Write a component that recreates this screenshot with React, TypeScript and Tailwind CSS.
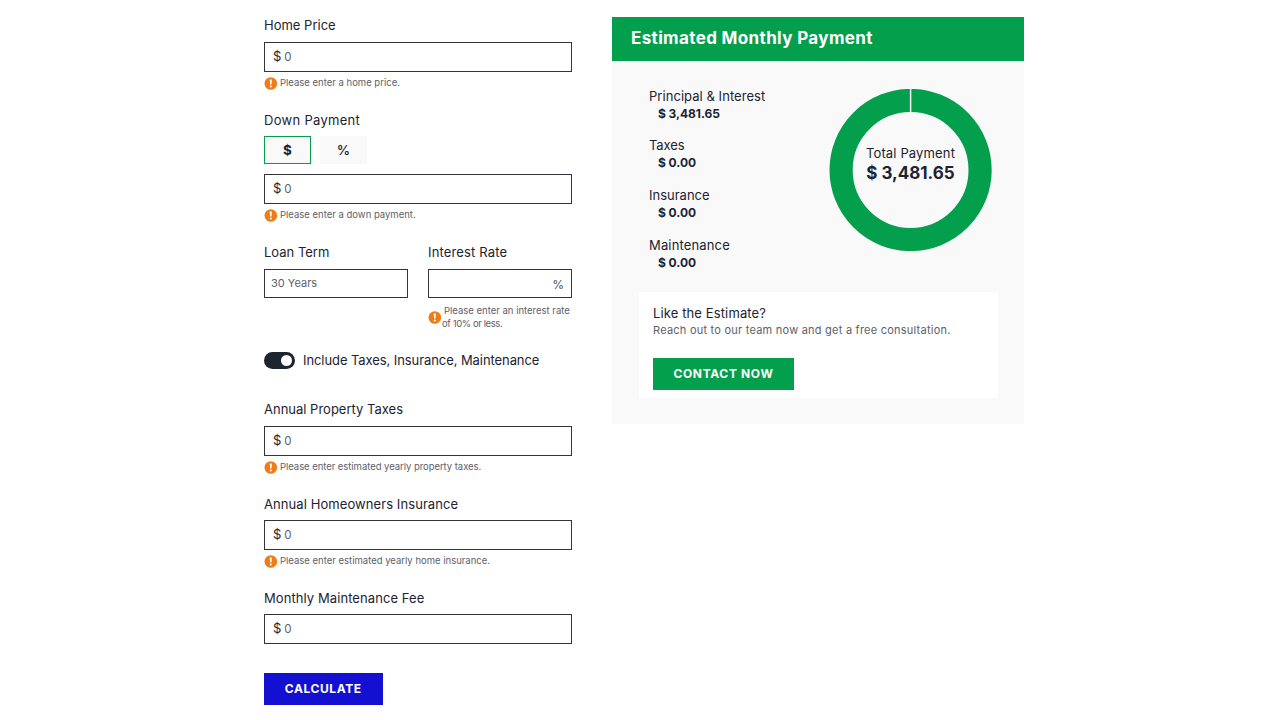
import type { ReactNode } from "react";

function Alert() {
  return (
    <svg className="h-[13px] w-[13px] shrink-0" viewBox="0 0 13 13">
      <circle cx="6.8" cy="6.5" r="6.3" fill="#f07c16" />
      <path d="M5.7 2.4h2.2l-.4 5.2h-1.4z" fill="#fff" />
      <circle cx="6.8" cy="9.6" r="1" fill="#fff" />
    </svg>
  );
}

function Hint({ children, className = "" }: { children: ReactNode; className?: string }) {
  return (
    <div className={`flex h-[22px] items-center gap-[3px] whitespace-nowrap text-[9.5px] text-[#5d6169] ${className}`}>
      <Alert />
      <span>{children}</span>
    </div>
  );
}

function Label({ children, className = "" }: { children: ReactNode; className?: string }) {
  return (
    <div className={`flex h-5 items-center whitespace-nowrap text-[13px] text-[#1d2330] ${className}`}>{children}</div>
  );
}

function MoneyInput({ className = "" }: { className?: string }) {
  return (
    <div className={`flex h-[30px] items-center gap-[3px] border border-[#33353a] pl-2 ${className}`}>
      <span className="text-[13px] text-[#1d2330]">$</span>
      <span className="pt-0.5 text-[11.5px] text-[#5d6169]">0</span>
    </div>
  );
}

function CostRow({ name, value, className }: { name: string; value: string; className: string }) {
  return (
    <div className="h-[49.7px] whitespace-nowrap text-[#1d2330]">
      <div className={`h-[18px] text-[13px] leading-[18px] ${className}`}>{name}</div>
      <div className="h-[18px] pl-[9px] text-[12px] font-bold leading-[18.6px] -tracking-[0.05px]">{value}</div>
    </div>
  );
}

function Donut() {
  return (
    <div className="relative h-[162px] w-[163px]">
      <svg className="h-full w-full" viewBox="0 0 163 162">
        <circle cx="81.6" cy="81" r="69.5" fill="none" stroke="#039f4d" strokeWidth="23.2" />
        <path d="M81.6 0v23.5" stroke="#f9f9f9" strokeWidth="1.5" />
      </svg>
      <div className="absolute inset-x-0 top-[55px] text-center text-[#1d2330]">
        <div className="text-[13px] leading-[18px] tracking-[0.15px]">Total Payment</div>
        <div className="text-[17px] font-bold leading-[22px]">$ 3,481.65</div>
      </div>
    </div>
  );
}

export default function App() {
  return (
    <div className="flex h-[720px] w-[1280px] items-start gap-10 overflow-hidden bg-white pl-[264px] font-['Inter','Liberation_Sans',sans-serif]">
      <form className="w-[308px] pt-4">
        <Label>Home Price</Label>
        <MoneyInput className="mt-1.5" />
        <Hint>Please enter a home price.</Hint>

        <Label className="mt-[17px] tracking-[0.3px]">Down Payment</Label>
        <div className="mt-[5px] flex gap-[9px] text-[13.5px] text-[#1d2330]">
          <div className="flex h-7 w-[47px] items-center justify-center border border-[#039f4d] bg-[#f9f9f9] font-bold">$</div>
          <div className="flex h-7 w-[47px] items-center justify-center bg-[#f9f9f9] font-medium">%</div>
        </div>
        <MoneyInput className="mt-2.5" />
        <Hint>Please enter a down payment.</Hint>

        <div className="mt-[17px] flex h-[87px] gap-5">
          <div className="w-36">
            <Label>Loan Term</Label>
            <div className="mt-1.5 flex h-[29px] items-center border border-[#33353a] pl-1.5 text-[11px] text-[#5d6169]">
              30 Years
            </div>
          </div>
          <div className="w-36">
            <Label className="tracking-[0.15px]">Interest Rate</Label>
            <div className="mt-1.5 flex h-[29px] items-center justify-end border border-[#33353a] pr-[7px] pt-[3px] text-[12px] text-[#4b4f58]">
              %
            </div>
            <div className="mt-[6px] flex items-center whitespace-nowrap text-[9.5px] leading-[13px] text-[#5d6169]">
              <Alert />
              <div className="pl-px">
                <div className="pl-[2px]">Please enter an interest rate</div>
                <div className="-tracking-[0.4px]">of 10% or less.</div>
              </div>
            </div>
          </div>
        </div>

        <div className="mt-5 flex h-5 items-center gap-2">
          <div className="flex h-[17px] w-[31px] items-center justify-end rounded-full bg-[#1d2530] pr-[3px]">
            <div className="h-[11px] w-[11px] rounded-full bg-white" />
          </div>
          <Label className="pt-px -tracking-[0.08px]">Include Taxes, Insurance, Maintenance</Label>
        </div>

        <Label className="mt-[30px]">Annual Property Taxes</Label>
        <MoneyInput className="mt-1.5" />
        <Hint className="-tracking-[0.05px]">Please enter estimated yearly property taxes.</Hint>

        <Label className="mt-[17px] tracking-[0.08px]">Annual Homeowners Insurance</Label>
        <MoneyInput className="mt-[5px]" />
        <Hint>Please enter estimated yearly home insurance.</Hint>

        <Label className="mt-[17px] tracking-[0.08px]">Monthly Maintenance Fee</Label>
        <MoneyInput className="mt-[5px]" />

        <div className="mt-[28.5px] flex h-8 w-[118.5px] items-center justify-center bg-[#1410d2] text-[12px] font-bold tracking-[0.6px] text-white">
          CALCULATE
        </div>
      </form>

      <section className="mt-[17px] h-[407px] w-[412px] bg-[#f9f9f9]">
        <h2 className="flex h-11 items-center whitespace-nowrap bg-[#039f4d] pl-[19px] text-[17px] font-bold tracking-[0.36px] text-white">
          Estimated Monthly Payment
        </h2>
        <div className="flex h-[231px] pl-[37px]">
          <div className="w-[180px] pt-[25.8px]">
            <CostRow name="Principal & Interest" value="$ 3,481.65" className="tracking-[0.05px]" />
            <CostRow name="Taxes" value="$ 0.00" className="-tracking-[0.1px]" />
            <CostRow name="Insurance" value="$ 0.00" className="" />
            <CostRow name="Maintenance" value="$ 0.00" className="tracking-[0.15px]" />
          </div>
          <div className="pt-7">
            <Donut />
          </div>
        </div>
        <div className="ml-[27px] h-[106px] w-[359px] whitespace-nowrap bg-white pl-3.5 pt-3">
          <div className="text-[13px] leading-[18px] tracking-[0.12px] text-[#1d2330]">Like the Estimate?</div>
          <div className="text-[11px] leading-4 tracking-[0.23px] text-[#5d6169]">
            Reach out to our team now and get a free consultation.
          </div>
          <div className="mt-[19.5px] flex h-8 w-[141px] items-center justify-center bg-[#039f4d] text-[12px] font-bold tracking-[0.65px] text-white">
            CONTACT NOW
          </div>
        </div>
      </section>
    </div>
  );
}
